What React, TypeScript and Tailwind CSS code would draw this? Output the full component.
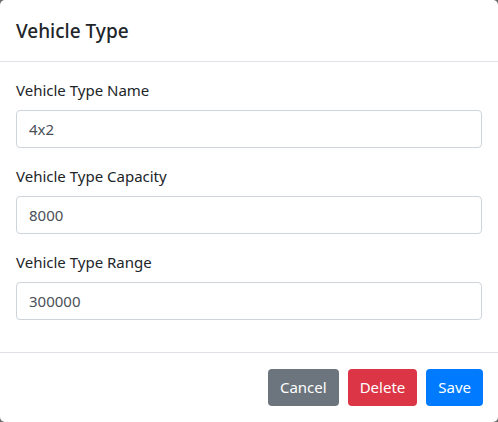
import React from 'react';

const fields = [
  { label: 'Vehicle Type Name', value: '4x2' },
  { label: 'Vehicle Type Capacity', value: '8000' },
  { label: 'Vehicle Type Range', value: '300000' },
];

export default function App() {
  return (
    <div className="w-[498px] h-[422px] bg-[#6b6b6b] overflow-hidden">
      <div
        className="w-full h-full bg-white rounded-[5px] flex flex-col text-[#212529]"
        style={{ fontFamily: '"Noto Sans", "Open Sans", sans-serif' }}
      >
        <div className="h-[62px] px-4 flex items-center border-b border-[#dee2e6]">
          <h5 className="text-[19px] font-medium leading-[30px]">Vehicle Type</h5>
        </div>
        <div className="p-4 flex flex-col">
          {fields.map((f) => (
            <div key={f.label} className="mb-4 last:mb-0 flex flex-col">
              <label className="text-[15px] leading-6 mb-2">{f.label}</label>
              <input
                defaultValue={f.value}
                className="h-[38px] px-3 text-[15px] text-[#495057] border border-[#ced4da] rounded-[4px] outline-none"
              />
            </div>
          ))}
        </div>
        <div className="mt-4 border-t border-[#dee2e6] flex-1 flex items-center justify-end gap-[9px] px-[15px]">
          <button className="h-[37px] px-3 rounded-[4px] bg-[#6c757d] text-white text-[15px]">Cancel</button>
          <button className="h-[37px] px-3 rounded-[4px] bg-[#dc3545] text-white text-[15px]">Delete</button>
          <button className="h-[37px] px-3 rounded-[4px] bg-[#007bff] text-white text-[15px]">Save</button>
        </div>
      </div>
    </div>
  );
}
